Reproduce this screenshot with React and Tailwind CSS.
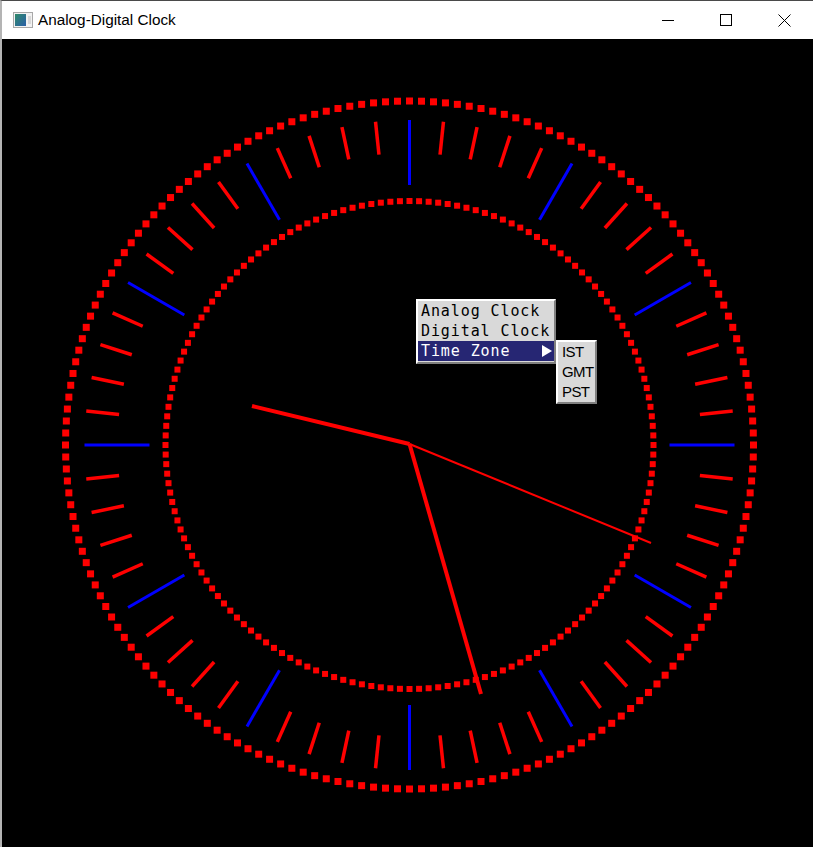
import React from 'react';

const CX = 409.5;
const CY = 445;

const dots = (count, r, size) => {
  const out = [];
  for (let i = 0; i < count; i++) {
    const a = (i / count) * Math.PI * 2;
    const x = CX + Math.cos(a) * r;
    const y = CY + Math.sin(a) * r;
    out.push(<rect key={i} x={x - size / 2} y={y - size / 2} width={size} height={size} fill="#ff0000" />);
  }
  return out;
};

const ticks = () => {
  const out = [];
  for (let i = 0; i < 60; i++) {
    const a = (i * 6 * Math.PI) / 180;
    const hour = i % 5 === 0;
    const r1 = hour ? 260 : 292;
    const r2 = 325;
    const s = Math.sin(a);
    const c = Math.cos(a);
    out.push(
      <line
        key={i}
        x1={CX + s * r1}
        y1={CY - c * r1}
        x2={CX + s * r2}
        y2={CY - c * r2}
        stroke={hour ? '#0000ff' : '#ff0000'}
        strokeWidth={hour ? 3 : 3.5}
      />
    );
  }
  return out;
};

const TitleBar = () => (
  <div className="h-[38px] bg-white flex items-center shrink-0">
    <svg width="20" height="16" viewBox="0 0 20 16" className="ml-[11px]">
      <defs>
        <linearGradient id="ic" x1="0" y1="0" x2="1" y2="1">
          <stop offset="0" stopColor="#2f8a6a" />
          <stop offset="1" stopColor="#2a5fa8" />
        </linearGradient>
      </defs>
      <rect x="0.5" y="0.5" width="19" height="15" fill="#f2f2f2" stroke="#a8a8a8" />
      <rect x="2" y="2" width="11" height="12" fill="url(#ic)" />
      <rect x="15" y="4" width="3" height="8" fill="#d8d8d8" />
    </svg>
    <span className="ml-[5px] text-[15.3px] text-black" style={{ fontFamily: '"Liberation Sans", Arial, sans-serif' }}>
      Analog-Digital Clock
    </span>
    <div className="ml-auto flex items-center h-full">
      <div className="w-[58px] h-full flex items-center justify-center">
        <svg width="12" height="12" viewBox="0 0 12 12">
          <line x1="0" y1="6.5" x2="12" y2="6.5" stroke="#000" strokeWidth="1" />
        </svg>
      </div>
      <div className="w-[58px] h-full flex items-center justify-center">
        <svg width="12" height="12" viewBox="0 0 12 12">
          <rect x="0.5" y="0.5" width="11" height="11" fill="none" stroke="#000" strokeWidth="1" />
        </svg>
      </div>
      <div className="w-[58px] h-full flex items-center justify-center">
        <svg width="13" height="13" viewBox="0 0 13 13">
          <line x1="0.5" y1="0.5" x2="12.5" y2="12.5" stroke="#000" strokeWidth="1" />
          <line x1="12.5" y1="0.5" x2="0.5" y2="12.5" stroke="#000" strokeWidth="1" />
        </svg>
      </div>
    </div>
  </div>
);

const menuBox = 'absolute bg-[#d9d9d9] border-2 border-t-white border-l-white border-b-[#808080] border-r-[#808080]';

const PopupMenu = () => (
  <>
    <div className={`${menuBox} left-[414px] top-[298px] w-[140px] h-[65px]`}>
      <div className="flex flex-col text-[15px] tracking-[0.9px]" style={{ fontFamily: '"DejaVu Sans Mono", monospace' }}>
        <div className="h-[20px] flex items-center pl-[3px] text-black">Analog Clock</div>
        <div className="h-[20px] flex items-center pl-[3px] text-black">Digital Clock</div>
        <div className="h-[20px] flex items-center pl-[3px] bg-[#262673] text-white">
          Time Zone
          <svg width="10" height="12" viewBox="0 0 10 12" className="ml-auto mr-[2px]">
            <polygon points="0,0 10,6 0,12" fill="#fff" />
          </svg>
        </div>
      </div>
    </div>
    <div className={`${menuBox} left-[554px] top-[339px] w-[41px] h-[64px]`}>
      <div className="flex flex-col text-[15px] text-black tracking-[-0.6px]" style={{ fontFamily: '"Liberation Sans", Arial, sans-serif' }}>
        <div className="h-[20px] flex items-center pl-[4px]">IST</div>
        <div className="h-[20px] flex items-center pl-[4px]">GMT</div>
        <div className="h-[20px] flex items-center pl-[4px]">PST</div>
      </div>
    </div>
  </>
);

export default function App() {
  return (
    <div className="relative w-[813px] h-[847px] overflow-hidden bg-white border-t border-t-[#4a4a4a] border-l-2 border-l-[#b4b4b4] flex flex-col">
      <TitleBar />
      <div className="flex-1 bg-black">
        <svg width="811" height="808" viewBox="2 39 811 808" className="block">
          {dots(180, 344, 7)}
          {dots(160, 244, 6)}
          {ticks()}
          <line x1={CX} y1={CY - 1} x2="252" y2="406" stroke="#ff0000" strokeWidth="4" />
          <line x1={CX} y1={CY - 1} x2="481" y2="694" stroke="#ff0000" strokeWidth="4" />
          <line x1={CX} y1={CY - 1} x2="651" y2="543" stroke="#ff0000" strokeWidth="2" />
        </svg>
      </div>
      <PopupMenu />
    </div>
  );
}
